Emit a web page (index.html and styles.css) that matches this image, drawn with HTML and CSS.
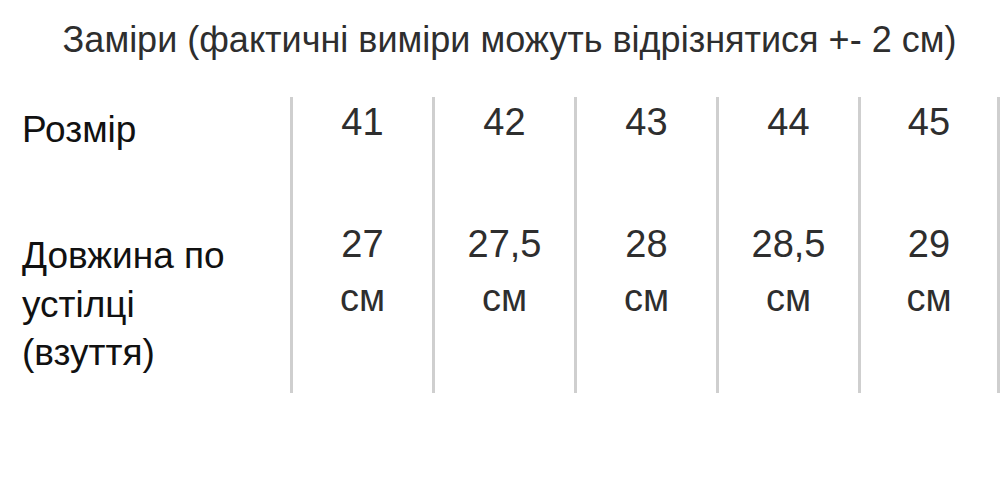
FILE: index.html
```html
<!DOCTYPE html>
<html lang="uk">
<head>
<meta charset="utf-8">
<title>Заміри</title>
<link rel="stylesheet" href="styles.css">
</head>
<body>
<h1 class="title">Заміри (фактичні виміри можуть відрізнятися +- 2 см)</h1>
<div class="sizes">
  <div class="label label-top">Розмір</div>
  <div class="num num-top">41</div>
  <div class="num num-top">42</div>
  <div class="num num-top">43</div>
  <div class="num num-top">44</div>
  <div class="num num-top num-last">45</div>

  <div class="label label-bottom">Довжина по<br>устілці<br>(взуття)</div>
  <div class="num num-bottom">27<br>см</div>
  <div class="num num-bottom">27,5<br>см</div>
  <div class="num num-bottom">28<br>см</div>
  <div class="num num-bottom">28,5<br>см</div>
  <div class="num num-bottom num-last">29<br>см</div>
</div>
</body>
</html>
```
FILE: styles.css
```css
html, body {
  margin: 0;
  padding: 0;
  background: #ffffff;
}

body {
  width: 1000px;
  height: 498px;
  overflow: hidden;
  font-family: "Liberation Sans", Arial, sans-serif;
}

.title {
  margin: 0;
  padding: 18px 0 0 19px;
  height: 44px;
  font-size: 36px;
  line-height: 44px;
  font-weight: normal;
  color: #2e2e2e;
  text-align: center;
  white-space: nowrap;
}

.sizes {
  margin-top: 35px;
  display: grid;
  grid-template-columns: 290px repeat(5, 142px);
  grid-template-rows: 120px 176px;
}

.label {
  padding-left: 22px;
  font-size: 37px;
  line-height: 48.5px;
  color: #111111;
}

.label-top {
  padding-top: 9px;
}

.label-bottom {
  padding-top: 15px;
}

.num {
  border-left: 3px solid #cfcfcf;
  text-align: center;
  font-size: 38px;
  color: #2e2e2e;
}

.num-last {
  border-right: 3px solid #cfcfcf;
}

.num-top {
  line-height: 50px;
}

.num-bottom {
  line-height: 54px;
}
```
